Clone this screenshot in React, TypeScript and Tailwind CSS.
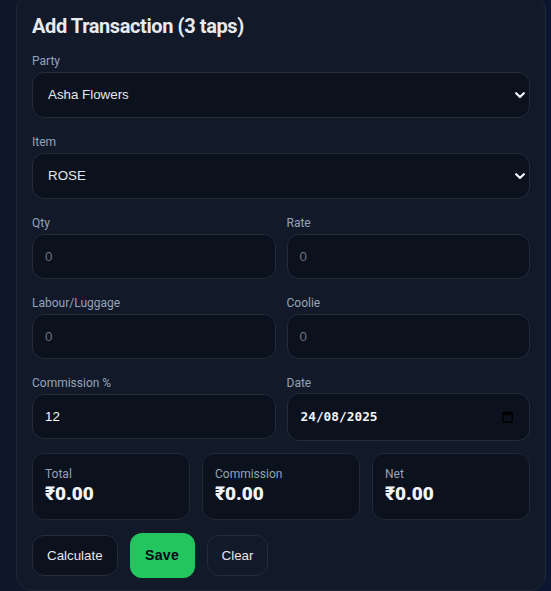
import React from "react";

const labelCls = "block text-xs leading-4 text-[#94a3b8] mb-[3px]";
const ctrlFont = { fontFamily: "'Liberation Sans', Arial, sans-serif" } as const;

function SelectField({ label, value }: { label: string; value: string }) {
  return (
    <div className="flex flex-col">
      <label className={labelCls}>{label}</label>
      <div className="h-[46px] rounded-xl border border-[#222c3b] bg-[#0b111d] flex items-center pl-[15px] pr-[4px]">
        <span className="text-[13.333px] text-[#e5e7eb]" style={ctrlFont}>{value}</span>
        <svg width="10" height="7" viewBox="0 0 10 7" className="ml-auto block">
          <polyline points="1.2,1.2 5,5 8.8,1.2" fill="none" stroke="#f1f5f9" strokeWidth="2.2" strokeLinecap="round" strokeLinejoin="round" />
        </svg>
      </div>
    </div>
  );
}

function InputField({ label, value, placeholder }: { label: string; value?: string; placeholder?: string }) {
  return (
    <div className="flex flex-col">
      <label className={labelCls}>{label}</label>
      <div className="h-[45px] rounded-xl border border-[#222c3b] bg-[#0b111d] flex items-center px-3">
        {value ? (
          <span className="text-[13.333px] text-[#f8fafc]" style={ctrlFont}>{value}</span>
        ) : (
          <span className="text-[13.333px] text-[#6b7280]" style={ctrlFont}>{placeholder}</span>
        )}
      </div>
    </div>
  );
}

function Stat({ label }: { label: string }) {
  return (
    <div className="h-[67px] rounded-xl border border-[#1f2937] bg-[#0b111d] px-3 pt-3">
      <div className="text-xs leading-4 text-[#94a3b8]">{label}</div>
      <div className="text-[19px] leading-6 font-black text-[#f1f5f9]" style={{ fontFamily: "'Roboto','Noto Sans',sans-serif" }}>₹0.00</div>
    </div>
  );
}

export default function App() {
  return (
    <div
      className="w-full min-h-[591px] h-[591px] overflow-hidden bg-[linear-gradient(90deg,#0f1728,#0c1631)]"
      style={{ fontFamily: "'Roboto','Noto Sans',sans-serif" }}
    >
      <div className="ml-4 mt-[-6px] w-[530px] rounded-2xl border border-[#1e2736] bg-[#121a29] px-[15px] pt-[17px] pb-3">
        <h2 className="text-xl leading-7 font-bold text-[#e8eaee] mb-[13px] tracking-[-0.4px]">Add Transaction (3 taps)</h2>
        <div className="flex flex-col gap-4">
          <SelectField label="Party" value="Asha Flowers" />
          <SelectField label="Item" value="ROSE" />
          <div className="grid grid-cols-2 gap-x-[11px]">
            <InputField label="Qty" placeholder="0" />
            <InputField label="Rate" placeholder="0" />
          </div>
          <div className="grid grid-cols-2 gap-x-[11px]">
            <InputField label="Labour/Luggage" placeholder="0" />
            <InputField label="Coolie" placeholder="0" />
          </div>
          <div className="grid grid-cols-2 gap-x-[11px] items-start">
            <InputField label="Commission %" value="12" />
            <div className="flex flex-col">
              <label className="block text-xs leading-4 text-[#94a3b8] mb-[2px]">Date</label>
              <div className="h-[48px] rounded-xl border border-[#222c3b] bg-[#0b111d] flex items-center pl-[13px] pr-[16px]">
                <span className="text-[12.8px] font-semibold text-[#f1f5f9]" style={{ fontFamily: "'DejaVu Sans Mono','Liberation Mono',monospace" }}>24/08/2025</span>
                <svg width="11" height="12" viewBox="0 0 11 12" className="ml-auto">
                  <rect x="0.75" y="1.75" width="9.5" height="9.5" rx="1" fill="none" stroke="#000" strokeWidth="1.5" />
                  <rect x="0.75" y="1.75" width="9.5" height="2.5" fill="#000" />
                  <rect x="2.5" y="0" width="1.5" height="2.5" fill="#000" />
                  <rect x="7" y="0" width="1.5" height="2.5" fill="#000" />
                </svg>
              </div>
            </div>
          </div>
        </div>
        <div className="grid grid-cols-3 gap-3 mt-3">
          <Stat label="Total" />
          <Stat label="Commission" />
          <Stat label="Net" />
        </div>
        <div className="flex items-center gap-3 mt-[13px]">
          <button className="h-[41px] px-[14px] rounded-xl border border-[#222c3b] bg-[#0b111d] text-[13.333px] text-[#e5e7eb]" style={ctrlFont}>Calculate</button>
          <button className="h-[45px] w-[65px] rounded-xl bg-[#22c55e] text-[14px] font-bold text-[#030712] tracking-[0.4px]" style={ctrlFont}>Save</button>
          <button className="h-[41px] px-[14px] rounded-xl border border-[#222c3b] bg-[#121a29] text-[13.333px] text-[#e5e7eb]" style={ctrlFont}>Clear</button>
        </div>
      </div>
    </div>
  );
}
